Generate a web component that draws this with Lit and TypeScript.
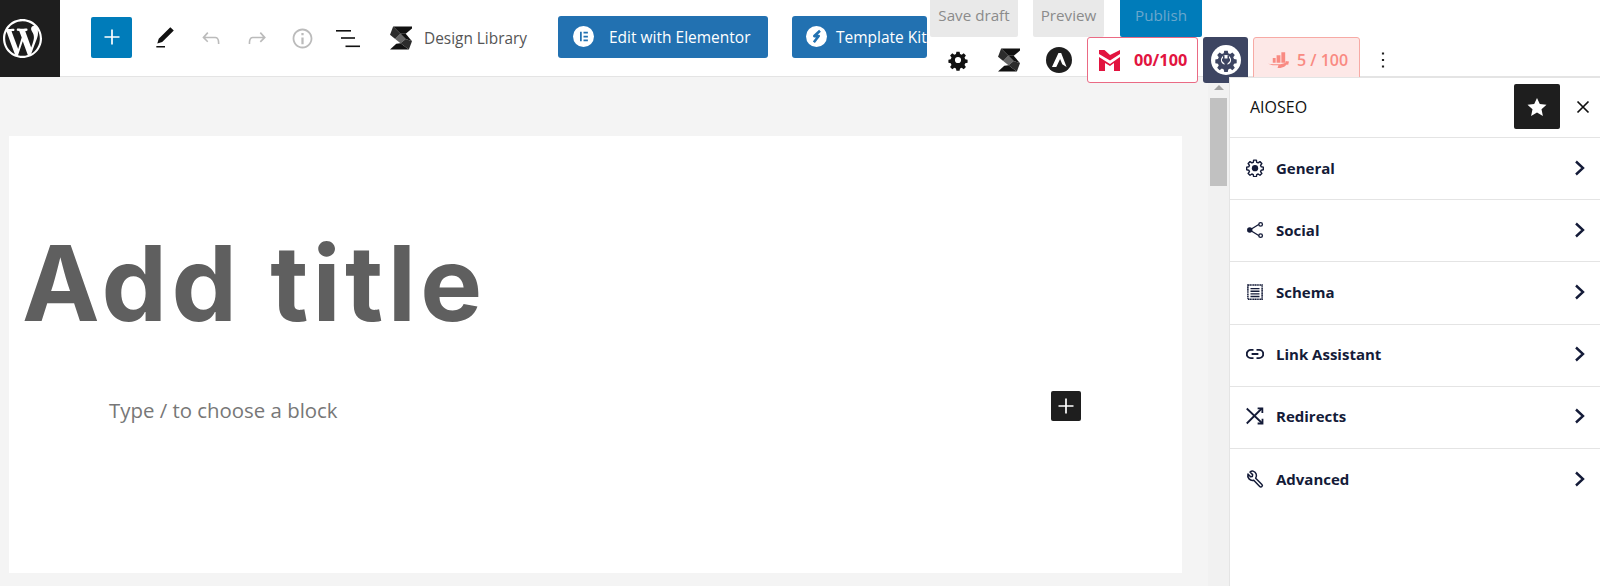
import { LitElement, html, css, svg } from "lit";
import { customElement } from "lit/decorators.js";

const ic = (path: unknown, cls: string, vb = "0 0 24 24") =>
  html`<svg class=${cls} viewBox=${vb} aria-hidden="true">${path}</svg>`;

const stackable = svg`
  <polygon points="3,0 21,0 21,2 15,7 10,7" fill="#111"/>
  <polygon points="0,8 3,0 10,7 5,12" fill="#2c2c2c"/>
  <polygon points="5,12 10,7 15,12 10,16" fill="#666"/>
  <polygon points="10,7 15,7 21,14 15,12" fill="#111"/>
  <polygon points="15,12 21,14 18,22 10,16" fill="#2c2c2c"/>
  <polygon points="0,22 6,16.500 10,16 18,22" fill="#111"/>
`;

const gearPath = "M10.200 2.500h3.600l.5 2.700 1.900.8 2.300-1.600 2.500 2.500-1.600 2.300.8 1.900 2.700.5v3.600l-2.700.5-.8 1.900 1.600 2.300-2.500 2.500-2.300-1.600-1.900.8-.5 2.700h-3.600l-.5-2.700-1.900-.8-2.300 1.600-2.500-2.500 1.600-2.300-.8-1.900-2.700-.5v-3.600l2.700-.5.8-1.900-1.600-2.300 2.500-2.500 2.300 1.600 1.900-.8zM12 8.500a3.500 3.500 0 1 0 0 7 3.500 3.500 0 0 0 0-7z";

const sideIcons: Record<string, unknown> = {
  General: svg`<path fill="none" stroke="currentColor" stroke-width="1.900" stroke-linejoin="round" d="M10.200 1.500h3.600l.5 2.900 1.900.8 2.400-1.700 2.500 2.500-1.700 2.400.8 1.900 2.900.5v3.600l-2.900.5-.8 1.900 1.700 2.400-2.500 2.500-2.400-1.700-1.900.8-.5 2.900h-3.600l-.5-2.900-1.900-.8-2.400 1.700-2.500-2.500 1.700-2.400-.8-1.900-2.900-.5v-3.600l2.900-.5.8-1.900-1.700-2.400 2.500-2.500 2.400 1.700 1.900-.8z"/><circle cx="12" cy="12.200" r="4.200" fill="currentColor"/>`,
  Social: svg`<path fill="none" stroke="currentColor" stroke-width="1.800" d="M5 12l13-8M5 12l13 8"/><circle cx="5" cy="12" r="3.600" fill="currentColor"/><circle cx="19.500" cy="4.500" r="2.400" fill="#fff" stroke="currentColor" stroke-width="1.800"/><circle cx="19.500" cy="19.500" r="2.400" fill="#fff" stroke="currentColor" stroke-width="1.800"/>`,
  Schema: svg`<path fill="none" stroke="currentColor" stroke-width="2" stroke-dasharray="1.800 .5" d="M2.500 2.500h19v19h-19z"/><path fill="none" stroke="currentColor" stroke-width="1.800" d="M6 7.500h12M6 11h12M6 14.500h12M6 18h12"/>`,
  "Link Assistant": svg`<path fill="none" stroke="currentColor" stroke-width="2.600" d="M10 6.500H6.500a5.500 5.500 0 0 0 0 11H10M14 6.500h3.500a5.500 5.500 0 0 1 0 11H14M7.500 12h9"/>`,
  Redirects: svg`<path fill="none" stroke="currentColor" stroke-width="2.400" d="M1 2l21 20M1 22L21 2"/><path fill="none" stroke="currentColor" stroke-width="2.400" d="M15.500 1.800h6.300v6.300M22 15.500V22h-6.500"/>`,
  Advanced: svg`<path fill="none" stroke="currentColor" stroke-width="2" stroke-linejoin="round" d="M9.500 1.500a6 6 0 0 0-4.200 1.200l3.500 3.500-.3 2.400-2.400.4-3.500-3.500a6.500 6.500 0 0 0 7.700 8.200l8 8.300a2 2 0 0 0 2.900 0 2 2 0 0 0 0-2.800l-8.300-8.200a6.300 6.300 0 0 0-3.400-9.500z"/>`,
};

@customElement("app-root")
export class AppRoot extends LitElement {
  static styles = css`
    :host { display: block; width: 100%; height: 586px; overflow: hidden; background: #f4f4f4;
      font-family: "Open Sans", "Noto Sans", sans-serif; }
    * { box-sizing: border-box; }
    .top { position: relative; z-index: 1; display: flex; height: 77px; background: #fff; border-bottom: 1px solid #e4e4e4; }
    .wp { width: 60px; height: 77px; flex: none; background: #1e1e1e; display: flex; align-items: center; padding-left: 3px; }
    .wp svg { width: 39px; height: 39px; fill: #fff; }
    .tools { display: flex; align-items: center; height: 76px; flex: none; }
    .inserter { width: 41px; height: 41px; margin: -2px 0 0 31px; background: #007cba; border-radius: 2px; display: flex; align-items: center; justify-content: center; }
    .inserter svg, .add svg { fill: none; stroke: #fff; stroke-width: 1.700; }
    .inserter svg { width: 24px; height: 24px; }
    .pen { width: 26px; height: 26px; margin-left: 20px; fill: #111; }
    .undo { width: 26px; height: 26px; margin-left: 20px; fill: #bbb; }
    .redo { width: 26px; height: 26px; margin-left: 20px; fill: #bbb; }
    .info { width: 27px; height: 27px; margin-left: 19px; fill: #bbb; }
    .list { width: 24px; height: 24px; margin-left: 20px; fill: #111; }
    .dl { width: 22px; height: 24px; margin-left: 30px; }
    .dl-text { margin-left: 12px; width: 103px; font-size: 15.400px; color: #555; white-space: nowrap; }
    .blue { height: 42px; margin-top: -3px; background: #2271b1; border-radius: 3px; color: #fff; font-size: 15.500px; font-weight: 500; display: flex; align-items: center; white-space: nowrap; overflow: hidden; flex: none; }
    .ele { width: 210px; margin-left: 31px; padding-left: 15px; gap: 15px; }
    .kit { width: 135px; margin-left: 24px; padding-left: 14px; gap: 9px; }
    .blue svg { width: 21px; height: 21px; flex: none; }
    .right { display: flex; flex-direction: column; margin-left: 3px; flex: none; }
    .row1 { display: flex; height: 37px; }
    .b { height: 37px; padding-bottom: 8px; border-radius: 0 0 2px 2px; font-size: 15.200px; color: #8b8b8b; background: #e9e9e9; display: flex; align-items: center; justify-content: center; }
    .save { width: 88px; }
    .prev { width: 71px; margin-left: 15px; }
    .pub { width: 82px; margin-left: 16px; background: #007cba; color: #6aa7cc; }
    .row2 { display: flex; align-items: center; height: 46px; }
    .gear { width: 24px; height: 24px; margin-left: 16px; fill: #111; }
    .s2 { width: 22px; height: 24px; margin-left: 28px; }
    .astra { width: 26px; height: 26px; margin-left: 26px; }
    .mbox { width: 111px; height: 46px; margin-left: 15px; background: #fff; border: 1px solid #ea6a84; border-radius: 3px; display: flex; align-items: center; padding-left: 11px; gap: 14px; color: #e2143f; font-weight: 700; font-size: 16.300px; }
    .mbox svg { width: 21px; height: 21px; flex: none; }
    .plug { width: 45px; height: 46px; margin-left: 5px; background: #3d4562; border-radius: 3px; display: flex; align-items: center; justify-content: center; }
    .plug svg { width: 30px; height: 30px; }
    .score { width: 107px; height: 46px; margin-left: 5px; background: #fde8e7; border: 1px solid #f7aaa5; border-radius: 3px; display: flex; align-items: center; padding-left: 14px; gap: 8px; color: #f98a82; font-weight: 600; font-size: 16px; white-space: nowrap; }
    .score svg { width: 21px; height: 18px; flex: none; }
    .dots { width: 26px; height: 26px; margin-left: 10px; fill: #222; }

    .body { display: flex; height: 509px; }
    .editor { width: 1208px; flex: none; padding: 59px 26px 13px 9px; }
    .paper { background: #fff; height: 437px; padding-top: 85px; }
    .title { font-family: Inter, "Open Sans", sans-serif; font-weight: 700; font-size: 104px; line-height: 124px; color: #5f5f5f; margin: 0; padding-left: 13px; letter-spacing: 4.300px; white-space: nowrap; }
    .block { display: flex; align-items: center; justify-content: space-between; margin-top: 50px; padding: 0 101px 0 100px; }
    .ph { font-size: 20.400px; color: #777; line-height: 30px; }
    .add { width: 30px; height: 30px; background: #1e1e1e; border-radius: 2px; display: flex; align-items: center; justify-content: center; margin-top: -8px; }
    .add svg { width: 24px; height: 24px; }
    .track { width: 21px; flex: none; background: #f1f1f1; display: flex; flex-direction: column; align-items: center; }
    .arrow { width: 0; height: 0; margin-top: 8px; border-left: 5px solid transparent; border-right: 5px solid transparent; border-bottom: 5px solid #a3a3a3; }
    .thumb { width: 17px; height: 88px; margin-top: 8px; background: #c1c1c1; }
    .side { position: relative; z-index: 2; flex: 1; background: #fff; border-left: 1px solid #e4e4e4; border-top: 1px solid #e4e4e4; }
    .side-head { height: 60px; display: flex; align-items: center; padding-left: 20px; border-bottom: 1px solid #e4e4e4; font-size: 16px; color: #111; }
    .side-head span { flex: 1; margin-top: -2px; }
    .star { width: 46px; height: 45px; background: #1e1e1e; border-radius: 2px; display: flex; align-items: center; justify-content: center; margin-top: -2px; }
    .star svg { width: 24px; height: 24px; fill: #fff; }
    .x { width: 24px; height: 24px; margin: -2px 5px 0 11px; fill: none; stroke: #111; stroke-width: 1.700; }
    .row { height: 62.200px; padding: 0 13px 2px 16px; display: flex; align-items: center; border-bottom: 1px solid #e4e4e4; color: #141b38; font-weight: 700; font-size: 15px; }
    .row:last-child { border-bottom: none; }
    .row .i { width: 18px; height: 18px; flex: none; margin-right: 12px; color: #141b38; }
    .row span { flex: 1; }
    .row .c { width: 16px; height: 16px; fill: none; stroke: #141b38; stroke-width: 2.400; }
  `;

  render() {
    return html`
      <div class="top">
        <div class="wp">${ic(svg`<path d="M20 10c0-5.510-4.490-10-10-10C4.480 0 0 4.490 0 10c0 5.520 4.480 10 10 10 5.510 0 10-4.480 10-10zM7.780 15.370L4.370 6.220c.550-.020 1.170-.080 1.170-.080.500-.060.440-1.130-.060-1.110 0 0-1.450.110-2.370.110-.180 0-.370 0-.580-.010C4.120 2.690 6.870 1.110 10 1.110c2.330 0 4.450.870 6.050 2.340-.680-.110-1.650.390-1.650 1.580 0 .740.450 1.360.900 2.100.350.610.550 1.360.550 2.460 0 1.490-1.400 5-1.400 5l-3.030-8.370c.540-.020.820-.170.820-.170.500-.050.440-1.250-.060-1.220 0 0-1.440.120-2.380.120-.870 0-2.330-.120-2.330-.120-.500-.030-.560 1.200-.060 1.220l.920.080 1.260 3.410zM17.410 10c.240-.640.740-1.870.430-4.250.700 1.290 1.050 2.710 1.050 4.250 0 3.290-1.730 6.240-4.400 7.780.970-2.590 1.940-5.200 2.920-7.780zM6.100 18.090C3.120 16.650 1.110 13.530 1.110 10c0-1.300.230-2.480.720-3.590C3.250 10.300 4.670 14.200 6.100 18.090zm4.030-6.630l2.580 6.980c-.860.290-1.760.450-2.710.450-.790 0-1.570-.110-2.290-.330.810-2.380 1.620-4.740 2.420-7.100z"/>`, "", "0 0 20 20")}</div>
        <div class="tools">
          <div class="inserter">${ic(svg`<path d="M12 4.500v15M4.500 12h15"/>`, "")}</div>
          ${ic(svg`<path d="M20.100 5.100L16.900 2 6.200 12.700l-1.300 4.400 4.500-1.300L20.100 5.100zM4 20.800h8v-1.500H4v1.500z"/>`, "pen")}
          ${ic(svg`<path d="M18.300 11.700c-.6-.6-1.400-.9-2.300-.9H6.700l2.900-3.300-1.100-1-4.500 5L8.500 16l1-1-2.700-2.700H16c.5 0 .9.200 1.300.5 1 1 1 3.400 1 4.500v.3h1.500v-.2c0-1.500 0-4.300-1.500-5.700z"/>`, "undo")}
          ${ic(svg`<path d="M15.600 6.500l-1.100 1 2.900 3.300H8c-.9 0-1.700.3-2.300.9-1.400 1.500-1.400 4.200-1.400 5.600v.2h1.500v-.3c0-1.100 0-3.500 1-4.500.3-.3.7-.5 1.300-.5h9.200L14.500 15l1.100 1.100 4.600-4.600-4.600-5z"/>`, "redo")}
          ${ic(svg`<path d="M12 3.200c-4.800 0-8.800 3.900-8.800 8.800 0 4.800 3.900 8.800 8.800 8.800 4.800 0 8.800-3.900 8.800-8.800 0-4.800-4-8.800-8.800-8.800zm0 16c-4 0-7.200-3.300-7.200-7.200C4.800 8 8 4.800 12 4.800s7.200 3.300 7.200 7.200c0 4-3.200 7.200-7.200 7.200zM11 17h2v-6h-2v6zm0-8h2V7h-2v2z"/>`, "info")}
          ${ic(svg`<rect x="0" y="4" width="15" height="1.600"/><rect x="5" y="11.200" width="14" height="1.600"/><rect x="9.500" y="19.500" width="14.500" height="1.600"/>`, "list")}
          ${ic(stackable, "dl", "0 0 21 22")}
          <span class="dl-text">Design Library</span>
          <div class="blue ele">
            ${ic(svg`<circle cx="12" cy="12" r="12" fill="#fff"/><path fill="#2271b1" d="M8 6.500h2v11H8zM12 6.500h5v2h-5zM12 11h5v2h-5zM12 15.500h5v2h-5z"/>`, "")}
            <span>Edit with Elementor</span>
          </div>
          <div class="blue kit">
            ${ic(svg`<circle cx="12" cy="12" r="12" fill="#fff"/><path fill="none" stroke="#2271b1" stroke-width="3" stroke-linejoin="round" d="M16 5.500l-6.500 6h5l-5.500 7"/>`, "")}
            <span>Template Kit</span>
          </div>
        </div>
        <div class="right">
          <div class="row1">
            <div class="b save">Save draft</div>
            <div class="b prev">Preview</div>
            <div class="b pub">Publish</div>
          </div>
          <div class="row2">
            ${ic(svg`<path d=${gearPath} fill-rule="evenodd" transform="translate(12 12) scale(.88) translate(-12 -12)"/>`, "gear")}
            ${ic(stackable, "s2", "0 0 21 22")}
            ${ic(svg`<circle cx="12" cy="12" r="12" fill="#1e1e1e"/><path fill="#fff" d="M11.500 5.500h2.500l5 13-4-2.500-2-5-3.500 7.500H5.500z"/>`, "astra")}
            <div class="mbox">
              ${ic(svg`<path fill="#e2143f" d="M0 0h5.500L11 5 21 0v4l-10 6.500L0 4zM0 7l11 7 10-7v14h-6v-8l-4 3-5-3v8H0z"/>`, "", "0 0 21 21")}
              <span>00/100</span>
            </div>
            <div class="plug">
              ${ic(svg`<circle cx="15" cy="15" r="15" fill="#fff"/><path fill="#3d4562" fill-rule="evenodd" transform="translate(15 15) scale(.98) translate(-12 -12)" d="M10.200 2.500h3.600l.5 2.700 1.900.8 2.300-1.600 2.500 2.500-1.600 2.300.8 1.900 2.700.5v3.600l-2.700.5-.8 1.900 1.600 2.300-2.500 2.500-2.300-1.600-1.900.8-.5 2.700h-3.600l-.5-2.700-1.900-.8-2.300 1.600-2.500-2.500 1.600-2.300-.8-1.900-2.700-.5v-3.600l2.700-.5.8-1.900-1.600-2.300 2.500-2.500 2.300 1.600 1.900-.8zM12 6.800a5.200 5.200 0 1 0 0 10.400 5.200 5.200 0 0 0 0-10.400z"/><path fill="#3d4562" d="M12 10.500h1.500v3h3v-3H18v3h1v2.500l-2.500 2.500V25h-3v-6.500L11 16v-2.500h1z"/>`, "", "0 0 30 30")}
            </div>
            <div class="score">
              ${ic(svg`<path fill="#f98a82" d="M5 7h3v5H5zM9 4h4v8H9zM14 1h4v11h-4zM0 13l6 .5h7L17 12.500l2-1.500-1-1 4 .5-1 4-1-1-3 2.500-4 1.500h-3l1-3H5z"/>`, "", "0 0 22 18")}
              <span>5 / 100</span>
            </div>
            ${ic(svg`<path d="M13 19h-2v-2h2v2zm0-6h-2v-2h2v2zm0-6h-2V5h2v2z"/>`, "dots")}
          </div>
        </div>
      </div>
      <div class="body">
        <div class="editor">
          <div class="paper">
            <h1 class="title">Add title</h1>
            <div class="block">
              <span class="ph">Type / to choose a block</span>
              <div class="add">${ic(svg`<path d="M12 4.500v15M4.500 12h15"/>`, "")}</div>
            </div>
          </div>
        </div>
        <div class="track"><div class="arrow"></div><div class="thumb"></div></div>
        <div class="side">
          <div class="side-head">
            <span>AIOSEO</span>
            <div class="star">${ic(svg`<path d="M12 3l2.800 6 6.700.8-5 4.500 1.400 6.600-5.900-3.300-5.900 3.300 1.400-6.600-5-4.500 6.700-.8z"/>`, "")}</div>
            ${ic(svg`<path d="M6.500 6.500l11 11M17.500 6.500l-11 11"/>`, "x")}
          </div>
          ${Object.keys(sideIcons).map((k) => html`
            <div class="row">
              ${ic(sideIcons[k], "i")}
              <span>${k}</span>
              ${ic(svg`<path d="M5 1.500l7 6.500-7 6.500"/>`, "c", "0 0 16 16")}
            </div>`)}
        </div>
      </div>
    `;
  }
}
